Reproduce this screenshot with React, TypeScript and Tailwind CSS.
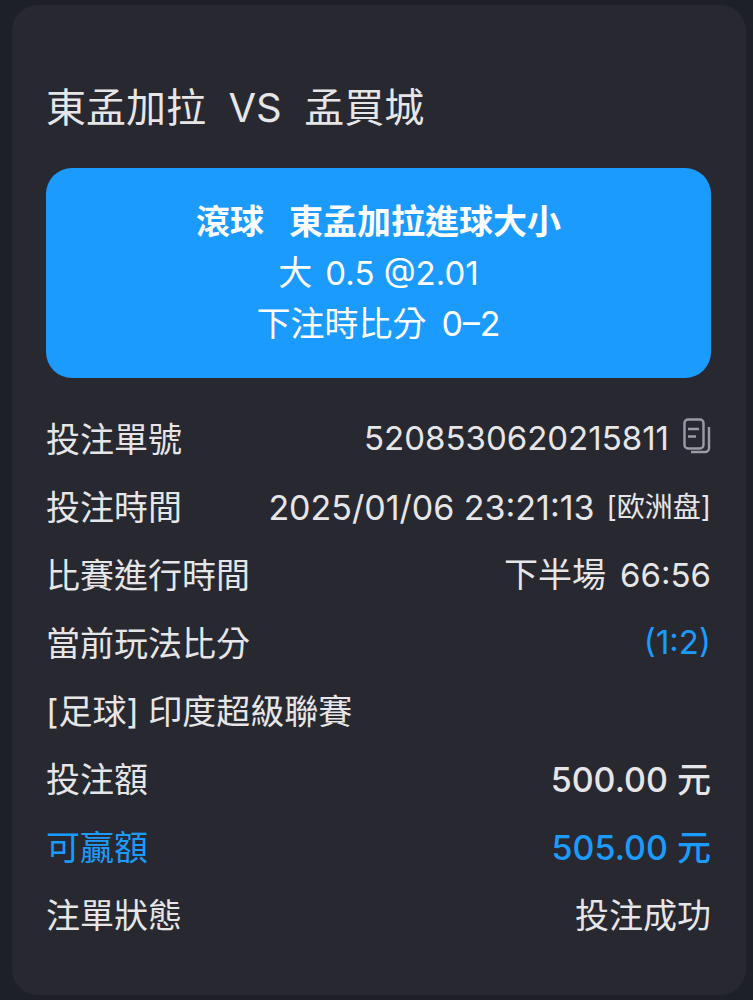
type RowProps = { label: React.ReactNode; value?: React.ReactNode; labelCls?: string; valueCls?: string };

function Row({ label, value, labelCls = '', valueCls = '' }: RowProps) {
  return (
    <div className="flex h-[68px] items-center justify-between">
      <span className={labelCls}>{label}</span>
      <span className={valueCls}>{value}</span>
    </div>
  );
}

function CopyIcon() {
  return (
    <svg width="28" height="36" viewBox="0 0 28 36" fill="none" stroke="#9b9ca3" strokeWidth="2.4" className="ml-[14px] -translate-y-[3px]">
      <rect x="1.5" y="1.5" width="19" height="29" rx="3.5" />
      <path d="M5 11h11M5 18.5h8" />
      <path d="M26 9v21a4 4 0 0 1-4 4H8" />
    </svg>
  );
}

export default function App() {
  return (
    <div className="h-[1000px] w-[753px] overflow-hidden bg-[#1e2027] pl-3 pt-[5px] font-['Inter','Noto_Sans_CJK_TC',sans-serif] text-[34px] text-[#e6e6e8]">
      <div className="h-[990px] w-[734px] rounded-[26px] bg-[#282930] pl-[34px] pr-[35px]">
        <h1 className="pt-[79px] text-[40px] leading-[48px] font-normal">東孟加拉&nbsp; VS&nbsp; 孟買城</h1>
        <div className="mt-[36px] flex h-[210px] flex-col items-center justify-center rounded-[26px] bg-[#1c9bfe] text-white">
          <div className="flex gap-[25px] leading-[52px] font-semibold">
            <span>滾球</span>
            <span>東孟加拉進球大小</span>
          </div>
          <div className="flex items-baseline gap-[13px] leading-[50px]">
            <span>大</span>
            <span className="text-[33px]">0.5 @2.01</span>
          </div>
          <div className="flex items-baseline gap-[15px] leading-[52px]">
            <span>下注時比分</span>
            <span>0–2</span>
          </div>
        </div>
        <div className="mt-[27px]">
          <Row label="投注單號" value={<span className="flex items-center text-[33px]">5208530620215811<CopyIcon /></span>} />
          <Row label="投注時間" value={<span className="flex items-center gap-3">2025/01/06 23:21:13<span className="text-[28px]">[欧洲盘]</span></span>} />
          <Row label="比賽進行時間" value={<span className="flex items-baseline gap-[14px]">下半場<span className="text-[33px]">66:56</span></span>} />
          <Row label="當前玩法比分" value="(1:2)" valueCls="text-[33px] text-[#1c9bfe]" />
          <Row label="[足球] 印度超級聯賽" />
          <Row label="投注額" value="500.00 元" valueCls="font-medium" />
          <Row label="可贏額" value="505.00 元" labelCls="text-[#1c9bfe]" valueCls="font-medium text-[#1c9bfe]" />
          <Row label="注單狀態" value="投注成功" />
        </div>
      </div>
    </div>
  );
}
